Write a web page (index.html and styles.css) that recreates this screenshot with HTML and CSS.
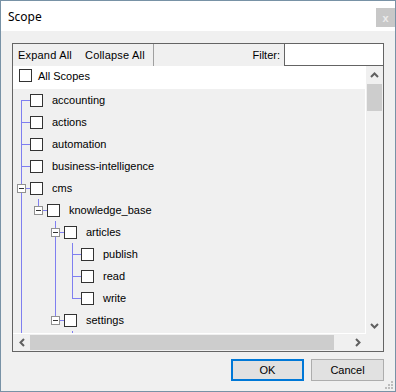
FILE: index.html
```html
<!DOCTYPE html>
<html lang="en">
<head>
    <meta charset="UTF-8">
    <title>Scope</title>
    <link rel="stylesheet" href="styles.css">
</head>
<body>
    <div class="window">
        <div class="titlebar">
            <span class="title">Scope</span>
            <span class="close">x</span>
        </div>

        <div class="content">
            <div class="panel">
                <div class="toolbar">
                    <span class="tool">Expand All</span>
                    <span class="tool">Collapse All</span>
                    <span class="sep"></span>
                    <span class="filter-label">Filter:</span>
                    <input class="filter" type="text">
                </div>

                <div class="scroller">
                    <div class="view">
                        <div class="root-row">
                            <span class="check"></span>
                            <span class="root-label">All Scopes</span>
                        </div>
                        <div class="tree">
                            <div class="row"><span class="g first"></span><span class="check"></span><span class="label">accounting</span></div>
                            <div class="row"><span class="g tee"></span><span class="check"></span><span class="label">actions</span></div>
                            <div class="row"><span class="g tee"></span><span class="check"></span><span class="label">automation</span></div>
                            <div class="row"><span class="g tee"></span><span class="check"></span><span class="label">business-intelligence</span></div>
                            <div class="row"><span class="g tee"><span class="exp"></span></span><span class="check"></span><span class="label">cms</span></div>
                            <div class="row"><span class="g pipe"></span><span class="g end"><span class="exp"></span></span><span class="check"></span><span class="label">knowledge_base</span></div>
                            <div class="row"><span class="g pipe"></span><span class="g"></span><span class="g tee"><span class="exp"></span></span><span class="check"></span><span class="label">articles</span></div>
                            <div class="row"><span class="g pipe"></span><span class="g"></span><span class="g pipe"></span><span class="g tee"></span><span class="check"></span><span class="label">publish</span></div>
                            <div class="row"><span class="g pipe"></span><span class="g"></span><span class="g pipe"></span><span class="g tee"></span><span class="check"></span><span class="label">read</span></div>
                            <div class="row"><span class="g pipe"></span><span class="g"></span><span class="g pipe"></span><span class="g end"></span><span class="check"></span><span class="label">write</span></div>
                            <div class="row"><span class="g pipe"></span><span class="g"></span><span class="g end"><span class="exp"></span></span><span class="check"></span><span class="label">settings</span></div>
                            <div class="row"><span class="g pipe"></span><span class="g"></span><span class="g"></span><span class="g tee"></span></div>
                        </div>
                    </div>

                    <div class="vscroll">
                        <span class="arrow">
                            <svg width="9" height="6" viewBox="0 0 9 6"><path d="M1 5 L4.5 1.5 L8 5" fill="none" stroke="#606060" stroke-width="2"/></svg>
                        </span>
                        <span class="vthumb"></span>
                        <span class="spacer"></span>
                        <span class="arrow">
                            <svg width="9" height="6" viewBox="0 0 9 6"><path d="M1 1 L4.5 4.5 L8 1" fill="none" stroke="#606060" stroke-width="2"/></svg>
                        </span>
                    </div>

                    <div class="hscroll">
                        <span class="arrow">
                            <svg width="6" height="9" viewBox="0 0 6 9"><path d="M5 1 L1.5 4.5 L5 8" fill="none" stroke="#606060" stroke-width="2"/></svg>
                        </span>
                        <span class="hthumb"></span>
                        <span class="spacer"></span>
                        <span class="arrow">
                            <svg width="6" height="9" viewBox="0 0 6 9"><path d="M1 1 L4.5 4.5 L1 8" fill="none" stroke="#606060" stroke-width="2"/></svg>
                        </span>
                    </div>

                    <div class="corner"></div>
                </div>
            </div>

            <div class="buttons">
                <button class="btn default">OK</button>
                <button class="btn">Cancel</button>
            </div>
        </div>

        <svg class="grip" width="8" height="8" viewBox="0 0 8 8">
            <rect x="6" y="0" width="2" height="2" fill="#bdbdbd"/>
            <rect x="3" y="3" width="2" height="2" fill="#bdbdbd"/>
            <rect x="6" y="3" width="2" height="2" fill="#bdbdbd"/>
            <rect x="0" y="6" width="2" height="2" fill="#bdbdbd"/>
            <rect x="3" y="6" width="2" height="2" fill="#bdbdbd"/>
            <rect x="6" y="6" width="2" height="2" fill="#bdbdbd"/>
        </svg>
    </div>
</body>
</html>
```

FILE: styles.css
```css
* {
    box-sizing: border-box;
}

body {
    margin: 0;
    font-family: "Liberation Sans", Arial, sans-serif;
    font-size: 11px;
    color: #000;
}

.window {
    width: 396px;
    height: 392px;
    border: 1px solid #7892a6;
    background-color: #f0f0f0;
    display: flex;
    flex-direction: column;
    position: relative;
}

.titlebar {
    height: 30px;
    flex: none;
    background-color: #fff;
    display: flex;
    align-items: center;
    padding-left: 7px;
}

.title {
    font-family: "Noto Sans", "Open Sans", sans-serif;
    font-size: 12px;
}

.close {
    margin-left: auto;
    align-self: flex-start;
    margin-top: 7px;
    width: 19px;
    height: 19px;
    background-color: #c8c8c8;
    color: #ececec;
    font-size: 11px;
    font-weight: bold;
    display: flex;
    align-items: center;
    justify-content: center;
}

.content {
    flex: 1;
    padding: 12px 11px 0 11px;
    display: flex;
    flex-direction: column;
}

.panel {
    height: 309px;
    flex: none;
    border: 1px solid #646464;
    display: flex;
    flex-direction: column;
}

/* toolbar with filter box */
.toolbar {
    height: 22px;
    flex: none;
    display: flex;
    align-items: center;
    padding-left: 5px;
}

.tool {
    letter-spacing: 0.2px;
}

.tool + .tool {
    margin-left: 13px;
}

.sep {
    width: 1px;
    align-self: stretch;
    background-color: #a0a0a0;
    margin-left: 8px;
}

.filter-label {
    margin-left: auto;
    margin-right: 4px;
}

.filter {
    align-self: flex-start;
    width: 100px;
    height: 23px;
    margin: -1px -1px 0 0;
    border: 1px solid #646464;
    background-color: #fff;
    padding: 0;
    outline: none;
}

/* tree + scrollbars */
.scroller {
    display: grid;
    grid-template-columns: 353px 17px;
    grid-template-rows: 268px 17px;
}

.view {
    overflow: hidden;
    border-right: 1px solid #fff;
    border-bottom: 1px solid #fff;
    display: flex;
    flex-direction: column;
}

.root-row {
    height: 23px;
    flex: none;
    background-color: #fff;
    display: flex;
    align-items: flex-start;
    padding: 3px 0 0 6px;
}

.root-label {
    margin-left: 6px;
    line-height: 13px;
    padding-top: 1px;
}

.check {
    width: 13px;
    height: 13px;
    flex: none;
    border: 1px solid #333;
    background-color: #fff;
}

.row {
    height: 22px;
    flex: none;
    display: flex;
    align-items: center;
}

.row .check {
    align-self: flex-start;
    margin-top: 5px;
}

.label {
    margin-left: 9px;
    white-space: nowrap;
}

.g {
    width: 17px;
    height: 22px;
    flex: none;
    position: relative;
}

.pipe::before,
.tee::before,
.end::before,
.first::before,
.tee::after,
.end::after,
.first::after {
    content: "";
    position: absolute;
    background-color: #7f7ff0;
}

.pipe::before,
.tee::before {
    left: 8px;
    top: 0;
    width: 1px;
    height: 22px;
}

.end::before {
    left: 8px;
    top: 0;
    width: 1px;
    height: 12px;
}

.first::before {
    left: 8px;
    top: 11px;
    width: 1px;
    height: 11px;
}

.tee::after,
.end::after,
.first::after {
    left: 8px;
    top: 11px;
    width: 9px;
    height: 1px;
}

.exp {
    position: absolute;
    left: 4px;
    top: 7px;
    width: 9px;
    height: 9px;
    border: 1px solid #919191;
    background-color: #fff;
    z-index: 1;
}

.exp::after {
    content: "";
    position: absolute;
    left: 1px;
    top: 3px;
    width: 5px;
    height: 1px;
    background-color: #333;
}

.vscroll {
    display: flex;
    flex-direction: column;
    align-items: center;
    background-color: #f0f0f0;
}

.hscroll {
    display: flex;
    align-items: center;
    background-color: #f0f0f0;
}

.arrow {
    width: 17px;
    height: 17px;
    flex: none;
    display: flex;
    align-items: center;
    justify-content: center;
}

.spacer {
    flex: 1;
}

.vthumb {
    width: 15px;
    height: 27px;
    margin-top: 1px;
    background-color: #cdcdcd;
}

.hthumb {
    width: 304px;
    height: 15px;
    background-color: #cdcdcd;
}

.corner {
    background-color: #f0f0f0;
}

/* dialog buttons */
.buttons {
    display: flex;
    justify-content: flex-end;
    gap: 7px;
    margin-top: 7px;
}

.btn {
    width: 73px;
    height: 22px;
    padding: 0;
    background-color: #e1e1e1;
    border: 1px solid #adadad;
    font-family: "Liberation Sans", Arial, sans-serif;
    font-size: 11px;
    color: #000;
}

.btn.default {
    border: 2px solid #0078d7;
}

.grip {
    position: absolute;
    right: 2px;
    bottom: 2px;
}
```
